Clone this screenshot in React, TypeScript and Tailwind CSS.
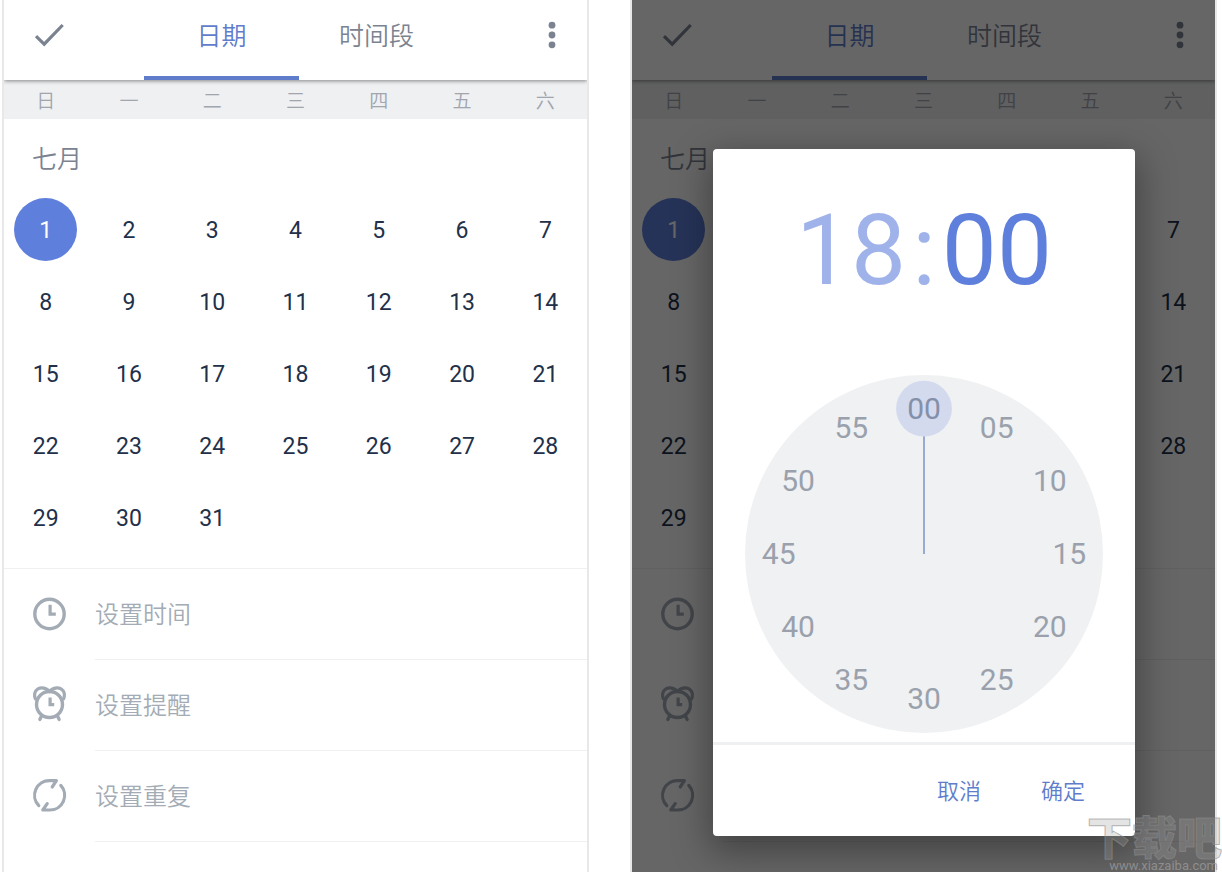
import { useState } from 'react'
import clsx from 'clsx'

const WEEKDAYS = ['日', '一', '二', '三', '四', '五', '六']
const DAYS = Array.from({ length: 31 }, (_, i) => i + 1)
const MINUTES = Array.from({ length: 12 }, (_, i) => i * 5)

/** Distance of the minute labels from the dial centre, as a share of the dial's width. */
const LABEL_RADIUS = 40.6

function CheckIcon() {
  return (
    <svg viewBox="0 0 36 36" className="size-9" fill="none" stroke="currentColor" strokeWidth="3.2">
      <path d="M5 18.2 L13.2 26.2 L31.7 7" />
    </svg>
  )
}

function MoreIcon() {
  return (
    <svg viewBox="0 0 36 36" className="size-9" fill="currentColor">
      <circle cx="18" cy="7.2" r="3.4" />
      <circle cx="18" cy="17" r="3.4" />
      <circle cx="18" cy="26.8" r="3.4" />
    </svg>
  )
}

function ClockIcon() {
  return (
    <svg viewBox="0 0 36 36" className="size-9" fill="none" stroke="currentColor">
      <circle cx="17.5" cy="18" r="14.7" strokeWidth="3.4" />
      <path d="M18.1 8.8 V18.2 H23.8" strokeWidth="3.2" />
    </svg>
  )
}

function AlarmIcon() {
  return (
    <svg viewBox="0 0 36 36" className="size-9 overflow-visible" fill="none" stroke="currentColor" strokeLinecap="round">
      <circle cx="17.5" cy="17.5" r="13" strokeWidth="3.4" />
      <path d="M3.4 11.8 C0.8 5.5 5 0.8 9.8 0.8 C12.8 0.8 15.2 1.8 17.5 4.2 C19.8 1.8 22.2 0.8 25.2 0.8 C30 0.8 34.2 5.5 31.6 11.8" strokeWidth="3.2" />
      <path d="M9.2 29.6 L7.9 32.4 M25.8 29.6 L27.1 32.4" strokeWidth="3.4" />
      <path d="M18.1 10.4 V17.6 H22.2" strokeWidth="3.2" strokeLinecap="butt" />
    </svg>
  )
}

function RepeatIcon() {
  return (
    <svg viewBox="0 0 36 36" className="size-9" fill="none" stroke="currentColor" strokeWidth="3.2" strokeLinecap="round" strokeLinejoin="round">
      <path d="M6.8 27.6 A14.7 14.7 0 0 1 17.8 2.6 H24.4 L20.2 9" />
      <path d="M28.8 7.4 A14.7 14.7 0 0 1 17.8 32 H10.8 L15.2 25.6" />
    </svg>
  )
}

const SETTINGS = [
  { label: '设置时间', Icon: ClockIcon },
  { label: '设置提醒', Icon: AlarmIcon },
  { label: '设置重复', Icon: RepeatIcon },
]

function Schedule() {
  const [tab, setTab] = useState('日期')
  const [selected, setSelected] = useState(1)

  return (
    <div>
      <header className="relative flex h-20 items-stretch bg-white text-[#7b8391] shadow-[0_1px_4px_rgba(0,0,0,0.45)]">
        <div className="flex w-[140px] items-center pb-2 pl-[27px]">
          <button type="button" aria-label="完成">
            <CheckIcon />
          </button>
        </div>
        {['日期', '时间段'].map((name) => (
          <button
            key={name}
            type="button"
            onClick={() => setTab(name)}
            className={clsx(
              'w-[155px] border-b-4 pb-[2px] text-[25px]',
              tab === name ? 'border-[#607dcb] text-[#607dcb]' : 'border-transparent',
            )}
          >
            {name}
          </button>
        ))}
        <div className="flex flex-1 items-center justify-end pr-[17px] pb-2">
          <button type="button" aria-label="更多">
            <MoreIcon />
          </button>
        </div>
      </header>

      <div className="grid h-[39px] grid-cols-7 items-center bg-[#eff0f2] pt-[6px] text-center text-[19px] text-[#a0a5ae]">
        {WEEKDAYS.map((day) => (
          <span key={day}>{day}</span>
        ))}
      </div>

      <h2 className="flex h-[75px] items-center pt-[6px] pl-7 text-[25px] text-[#7b8391]">七月</h2>
      <div className="grid grid-cols-7 pb-[14px] text-[23px] font-normal text-[#22304a]">
        {DAYS.map((day) => (
          <div key={day} className="flex h-[72px] items-center justify-center pb-[2px]">
            <button
              type="button"
              onClick={() => setSelected(day)}
              className={clsx('size-[63px] rounded-full pt-1', selected === day && 'bg-[#5f7fdc] text-white')}
            >
              {day}
            </button>
          </div>
        ))}
      </div>

      <div className="border-t border-[#eff0f2]">
        {SETTINGS.map(({ label, Icon }) => (
          <button key={label} type="button" className="flex w-full text-left text-[24px] text-[#a3abb5]">
            <span className="flex h-[91px] w-[91px] items-center pb-[2px] pl-7">
              <Icon />
            </span>
            <span className="flex flex-1 items-center border-b border-[#eff0f2] pt-[2px]">{label}</span>
          </button>
        ))}
      </div>
    </div>
  )
}

function Dial({ minute, onChange }: { minute: number; onChange: (minute: number) => void }) {
  return (
    <div className="relative mx-8 aspect-square rounded-full bg-[#eff1f3] text-[30px] font-normal text-[#9aa1ac]">
      <svg viewBox="0 0 100 100" className="absolute inset-0 size-full">
        <g transform={`rotate(${minute * 6} 50 50)`}>
          <line x1="50" y1="50" x2="50" y2="17" stroke="#8fa2cc" strokeWidth="0.5" />
          <circle cx="50" cy={50 - LABEL_RADIUS} r="7.8" fill="#d3daee" />
        </g>
      </svg>
      {MINUTES.map((value) => {
        const angle = (value * Math.PI) / 30
        return (
          <button
            key={value}
            type="button"
            onClick={() => onChange(value)}
            className={clsx(
              'absolute size-14 -translate-1/2 rounded-full leading-none',
              value === minute && 'text-[#8490aa]',
            )}
            style={{ left: `${50 + LABEL_RADIUS * Math.sin(angle)}%`, top: `${50 - LABEL_RADIUS * Math.cos(angle)}%` }}
          >
            {String(value).padStart(2, '0')}
          </button>
        )
      })}
    </div>
  )
}

function TimeDialog() {
  const [minute, setMinute] = useState(0)

  return (
    <div role="dialog" aria-label="设置时间" className="rounded-sm bg-white shadow-[0_12px_36px_4px_rgba(0,0,0,0.35)]">
      <p className="flex h-[226px] items-center justify-center pb-[22px] text-[98px] leading-none font-normal text-[#5f7fdc]">
        <span className="text-[#9fb2ea]">18</span>
        <span className="mx-[6px] text-[#9fb2ea]">:</span>
        <span>{String(minute).padStart(2, '0')}</span>
      </p>
      <Dial minute={minute} onChange={setMinute} />
      <div className="mt-[9px] flex h-[94px] items-center justify-end gap-[60px] border-t-3 border-[#eff0f2] pt-[2px] pr-[50px] text-[22px] text-[#607dcb]">
        <button type="button">取消</button>
        <button type="button">确定</button>
      </div>
    </div>
  )
}

function Watermark() {
  return (
    <div className="pointer-events-none absolute right-0 bottom-0 flex flex-col items-end">
      <p className="font-['Noto_Sans_CJK_SC',sans-serif] text-[45px] leading-[48px] font-black text-[#a0a0a0]/30 [-webkit-text-stroke:1px_rgba(140,140,140,0.6)]">
        下载吧
      </p>
      <p className="pr-1 text-[13px] leading-3 font-normal text-[#999]/80">www.xiazaiba.com</p>
    </div>
  )
}

export default function App() {
  return (
    <main className="relative grid h-screen grid-cols-2 gap-[41px] overflow-hidden bg-white pr-[5px] pl-[2px] font-[Roboto,'Noto_Sans_CJK_SC',sans-serif] font-[350]">
      <section className="overflow-hidden border-x-2 border-[#e8e8e8]">
        <Schedule />
      </section>
      <section className="relative overflow-hidden border-x-2 border-[#e8e8e8]">
        <Schedule />
        <div className="absolute inset-0 bg-black/60 pt-[149px] pr-[80px] pl-[81px]">
          <TimeDialog />
        </div>
      </section>
      <Watermark />
    </main>
  )
}
